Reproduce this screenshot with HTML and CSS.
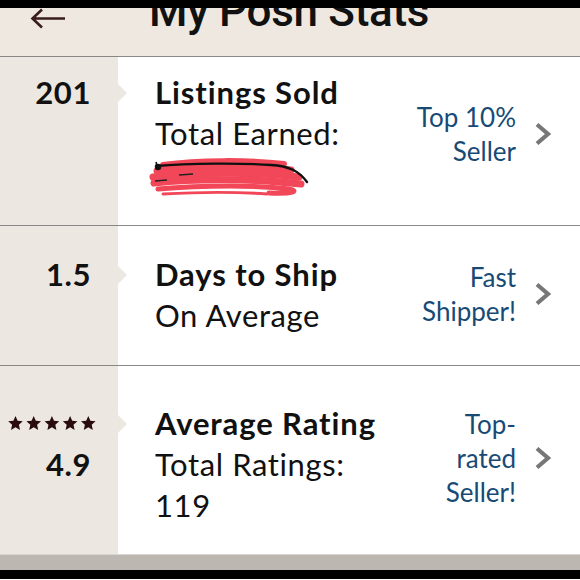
FILE: index.html
```html
<!DOCTYPE html>
<html>
<head>
<meta charset="utf-8">
<link rel="stylesheet" href="styles.css">
</head>
<body>
<div class="screen">
  <div class="topbar"></div>
  <header class="header">
    <svg class="back" width="36" height="22" viewBox="0 0 36 22"><path d="M35 10.5H3M12 1.5L2.5 10.5 12 19.5" fill="none" stroke="#3a1c1c" stroke-width="2.6"/></svg>
    <h1 class="title">My Posh Stats</h1>
  </header>

  <section class="row row-1">
    <div class="left">
      <div class="line num notch">201</div>
    </div>
    <div class="right">
      <div class="main">
        <div class="line strong">Listings Sold</div>
        <div class="line">Total Earned:</div>
        <div class="line scribble-line">
          <svg class="scribble" width="165" height="44" viewBox="0 0 165 44">
            <g fill="none" stroke="#f03a4c" stroke-linecap="round" opacity="0.93">
              <path d="M14 10C50 5 100 5 135 9" stroke-width="6"/>
              <path d="M8 16C55 11 105 11 142 15" stroke-width="7"/>
              <path d="M4 22C50 17 110 17 150 22" stroke-width="7"/>
              <path d="M5 28C50 23 110 24 152 29" stroke-width="7"/>
              <path d="M9 34C55 30 110 30 140 34C150 36 145 39 120 38" stroke-width="5"/>
              <path d="M14 39C50 37 90 37 118 39" stroke-width="3"/>
            </g>
            <path d="M7 11C40 8 95 8 122 10C140 11 150 16 158 27" fill="none" stroke="#111" stroke-width="2.4" stroke-linecap="round"/>
            <circle cx="9" cy="12" r="3.2" fill="#111"/>
            <path d="M7 7L9 14" stroke="#111" stroke-width="1.6"/>
            <path d="M6 26L18 25M30 20L44 19" stroke="#222" stroke-width="1.4"/>
          </svg>
        </div>
      </div>
      <div class="badge">
        <div class="badge-text"><div>Top 10%</div><div>Seller</div></div>
        <svg class="chev" width="18" height="24" viewBox="0 0 18 24"><path d="M3 2.5L14 12 3 21.5" fill="none" stroke="#777" stroke-width="4.2"/></svg>
      </div>
    </div>
  </section>

  <section class="row row-2">
    <div class="left">
      <div class="line num notch">1.5</div>
    </div>
    <div class="right">
      <div class="main">
        <div class="line strong">Days to Ship</div>
        <div class="line">On Average</div>
      </div>
      <div class="badge">
        <div class="badge-text"><div>Fast</div><div>Shipper!</div></div>
        <svg class="chev" width="18" height="24" viewBox="0 0 18 24"><path d="M3 2.5L14 12 3 21.5" fill="none" stroke="#777" stroke-width="4.2"/></svg>
      </div>
    </div>
  </section>

  <section class="row row-3">
    <div class="left">
      <div class="line stars notch">
        <svg width="88" height="15" viewBox="0 0 88 15">
          <defs><path id="st" d="M7.5 0L9.6 4.8 14.8 5.3 10.9 8.8 12 14 7.5 11.3 3 14 4.1 8.8 0.2 5.3 5.4 4.8Z"/></defs>
          <g fill="#2b0c0c">
            <use href="#st" x="0"/><use href="#st" x="18.2"/><use href="#st" x="36.4"/><use href="#st" x="54.6"/><use href="#st" x="72.8"/>
          </g>
        </svg>
      </div>
      <div class="line num">4.9</div>
    </div>
    <div class="right">
      <div class="main">
        <div class="line strong">Average Rating</div>
        <div class="line">Total Ratings:</div>
        <div class="line">119</div>
      </div>
      <div class="badge">
        <div class="badge-text"><div>Top-</div><div>rated</div><div>Seller!</div></div>
        <svg class="chev" width="18" height="24" viewBox="0 0 18 24"><path d="M3 2.5L14 12 3 21.5" fill="none" stroke="#777" stroke-width="4.2"/></svg>
      </div>
    </div>
  </section>

  <div class="footer"></div>
  <div class="bottombar"></div>
</div>
</body>
</html>
```
FILE: styles.css
```css
html, body {
  margin: 0;
  padding: 0;
  background: #000;
}
.screen {
  width: 580px;
  height: 580px;
  overflow: hidden;
  font-family: "Lato", "Liberation Sans", sans-serif;
  color: #111;
  background: #fff;
}
.topbar {
  height: 8px;
  background: #000;
}
.header {
  height: 49px;
  box-sizing: border-box;
  background: #eee8e1;
  border-bottom: 1px solid #8a8886;
  display: flex;
  align-items: flex-start;
  overflow: hidden;
}
.back {
  margin: 0 0 0 30px;
  flex: none;
}
.title {
  margin: -23px 0 0 83px;
  font-family: "Roboto", "Liberation Sans", sans-serif;
  font-weight: 500;
  font-size: 44px;
  line-height: 52px;
  color: #111;
  letter-spacing: -0.3px;
}
.row {
  display: grid;
  grid-template-columns: 118px 1fr;
  box-sizing: border-box;
  border-bottom: 1px solid #8a8886;
}
.row-1 { height: 169px; }
.row-2 { height: 140px; }
.row-3 { height: 188px; border-bottom: none; }
.row-1 > div { padding-top: 15px; }
.row-2 > div { padding-top: 28px; }
.row-3 > div { padding-top: 37px; }
.left {
  background: #ece7e0;
}
.line {
  font-size: 31px;
  line-height: 41px;
  height: 41px;
  white-space: nowrap;
  letter-spacing: 0.6px;
}
.num {
  font-weight: 700;
  text-align: right;
  padding-right: 27px;
  letter-spacing: 0.6px;
}
.notch {
  position: relative;
}
.notch::after {
  content: "";
  position: absolute;
  right: -9px;
  top: 50%;
  margin-top: -9px;
  border-style: solid;
  border-width: 9px 0 9px 9px;
  border-color: transparent transparent transparent #ece7e0;
}
.stars {
  display: flex;
  align-items: center;
  justify-content: flex-end;
  padding-right: 22px;
}
.stars svg { display: block; }
.right {
  display: flex;
  align-items: flex-start;
  padding-left: 37px;
}
.main {
  flex: 1;
}
.strong {
  font-weight: 700;
  letter-spacing: 0.9px;
}
.scribble {
  display: block;
  margin: 1px 0 0 -6px;
}
.badge {
  display: flex;
  align-items: center;
  gap: 18px;
  padding-right: 28px;
  align-self: flex-start;
}
.row-1 .badge { margin-top: 28px; }
.row-2 .badge { margin-top: 6px; }
.row-3 .badge { margin-top: 4px; }
.badge-text {
  text-align: right;
  color: #184a76;
  font-size: 26px;
  line-height: 34px;
}
.chev { display: block; }
.footer {
  height: 16px;
  background: #bcb7b1;
  border-top: 1px solid #d9d5d0;
  box-sizing: border-box;
}
.bottombar {
  height: 9px;
  background: #000;
}
```
